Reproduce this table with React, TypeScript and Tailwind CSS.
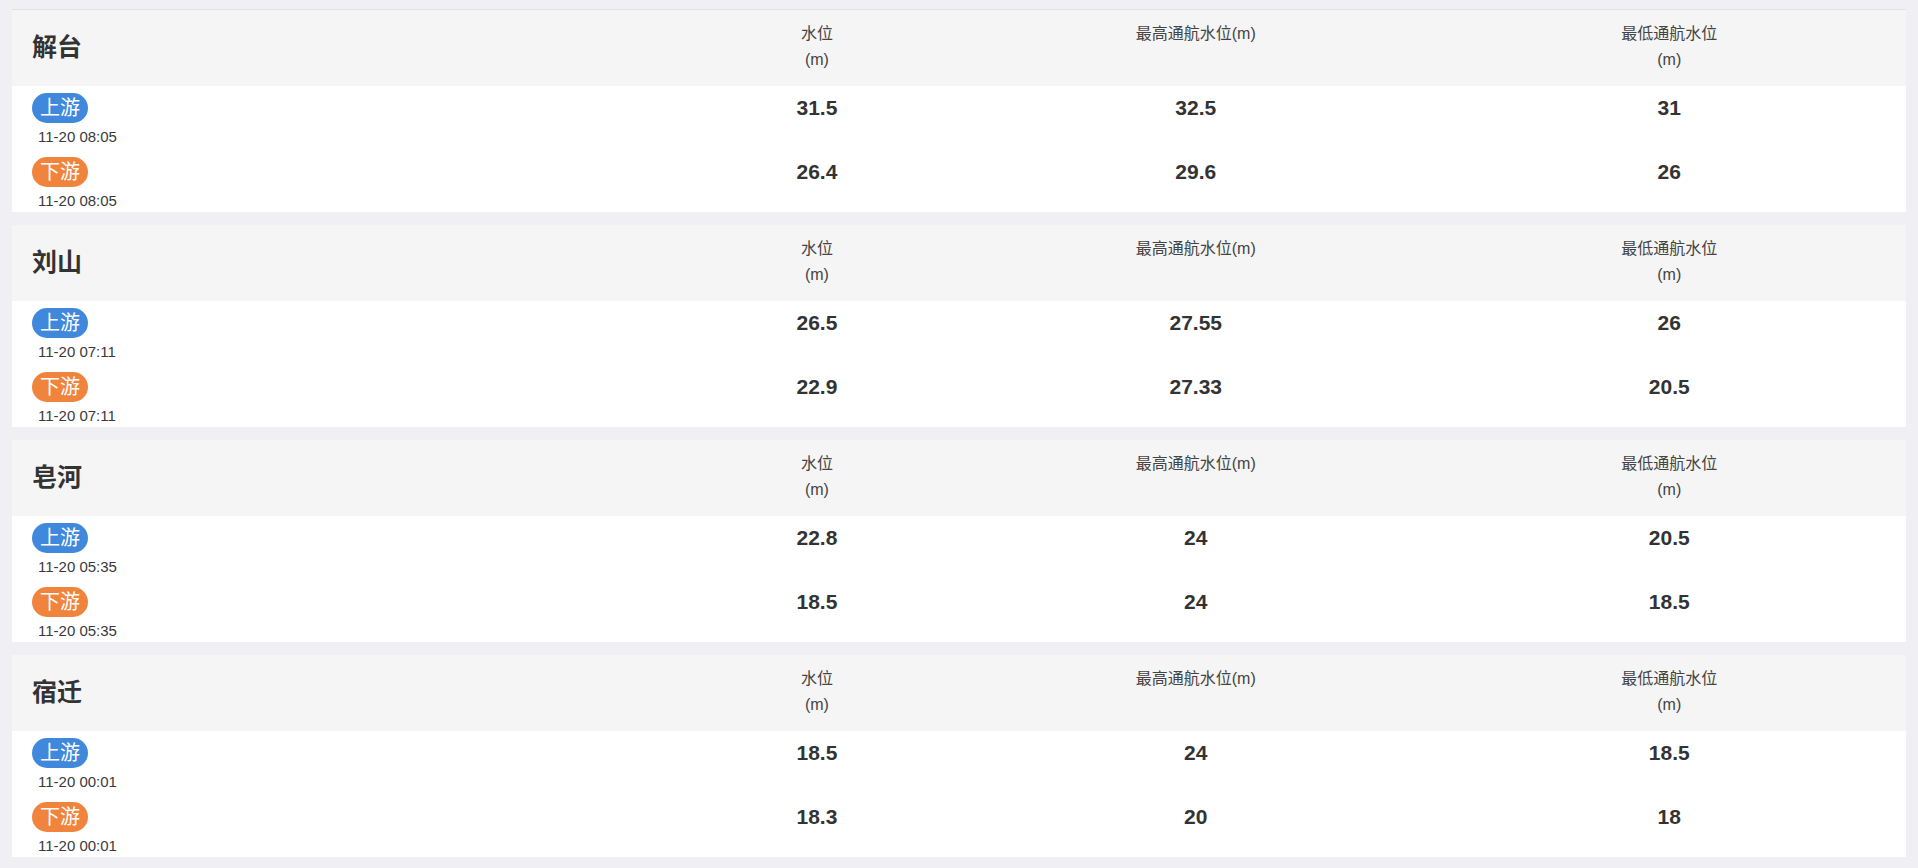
import React from 'react';

type Row = { time: string; level: string; max: string; min: string };
type Station = { name: string; up: Row; down: Row };

// 各站点水位数据
const stations: Station[] = [
  {
    name: '解台',
    up: { time: '11-20 08:05', level: '31.5', max: '32.5', min: '31' },
    down: { time: '11-20 08:05', level: '26.4', max: '29.6', min: '26' },
  },
  {
    name: '刘山',
    up: { time: '11-20 07:11', level: '26.5', max: '27.55', min: '26' },
    down: { time: '11-20 07:11', level: '22.9', max: '27.33', min: '20.5' },
  },
  {
    name: '皂河',
    up: { time: '11-20 05:35', level: '22.8', max: '24', min: '20.5' },
    down: { time: '11-20 05:35', level: '18.5', max: '24', min: '18.5' },
  },
  {
    name: '宿迁',
    up: { time: '11-20 00:01', level: '18.5', max: '24', min: '18.5' },
    down: { time: '11-20 00:01', level: '18.3', max: '20', min: '18' },
  },
];

const font = 'font-["Liberation_Sans","Noto_Sans_CJK_SC",sans-serif]';

const DataRow = ({ label, row, up }: { label: string; row: Row; up: boolean }) => (
  <div className="grid grid-cols-[35%_15%_25%_25%] items-start">
    <div className="pl-[20px]">
      <span
        className={`inline-block h-[30px] rounded-full px-[8px] text-[20px] leading-[30px] text-white ${
          up ? 'bg-[#3f88dc]' : 'bg-[#f0843c]'
        }`}
      >
        {label}
      </span>
      <div className="mt-[4px] pl-[6px] text-[15px] leading-[20px] text-[#3a3a3a]">{row.time}</div>
    </div>
    <div className="text-center text-[21px] font-bold leading-[30px] text-[#333]">{row.level}</div>
    <div className="text-center text-[21px] font-bold leading-[30px] text-[#333]">{row.max}</div>
    <div className="text-center text-[21px] font-bold leading-[30px] text-[#333]">{row.min}</div>
  </div>
);

const StationCard = ({ s }: { s: Station }) => (
  <div className="bg-white">
    {/* Cabecera */}
    <div className="grid h-[76px] grid-cols-[35%_15%_25%_25%] bg-[#f5f5f5] text-[16px] leading-[25.6px] text-[#444]">
      <div className="flex items-center pl-[20px] text-[25px] font-bold text-[#333]">{s.name}</div>
      <div className="pt-[11px] text-center">
        水位
        <br />
        (m)
      </div>
      <div className="pt-[11px] text-center">最高通航水位(m)</div>
      <div className="pt-[11px] text-center">
        最低通航水位
        <br />
        (m)
      </div>
    </div>

    {/* Filas */}
    <div className="flex flex-col gap-[10px] pt-[7px] pb-[1px]">
      <DataRow label="上游" row={s.up} up />
      <DataRow label="下游" row={s.down} up={false} />
    </div>
  </div>
);

export default function App() {
  return (
    <div className={`min-h-[868px] bg-[#efeff4] px-[12px] pt-[9px] ${font}`}>
      <div className="flex flex-col gap-[13px] border-t border-[#e2e2e6]">
        {stations.map((s) => (
          <StationCard key={s.name} s={s} />
        ))}
      </div>
    </div>
  );
}
